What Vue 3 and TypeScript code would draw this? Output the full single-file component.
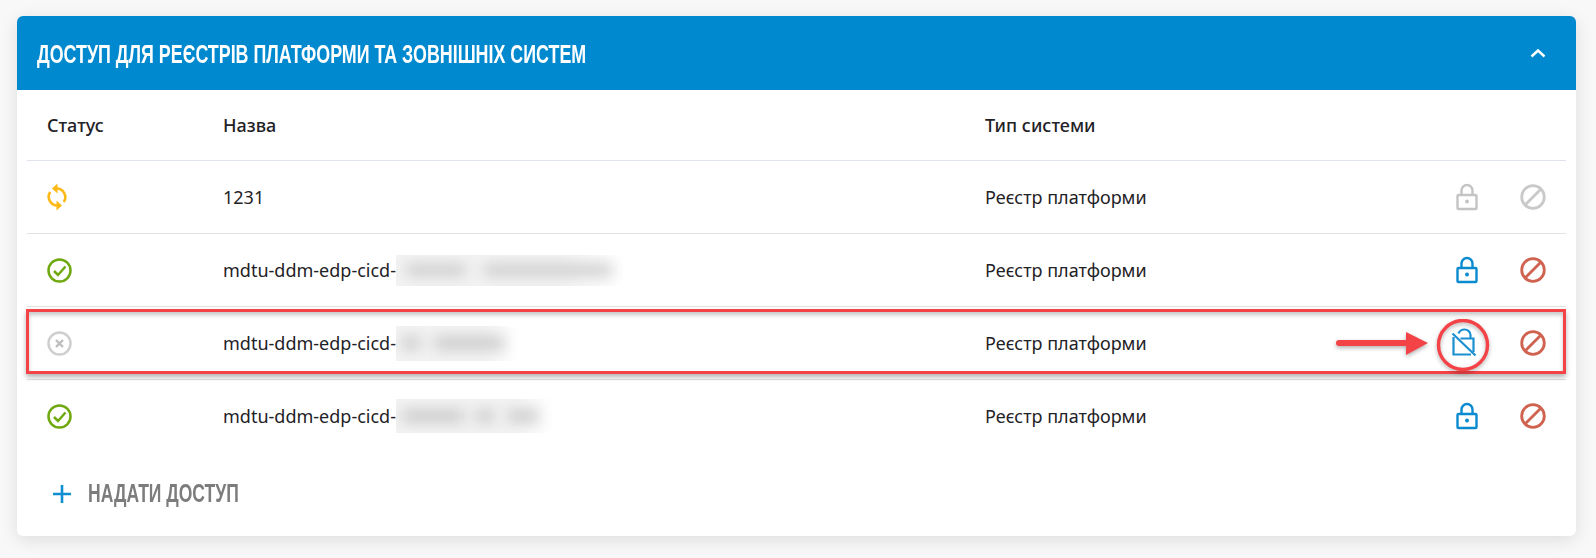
<script setup lang="ts">
interface Row {
  status: 'sync' | 'ok' | 'off'
  name: string
  patch?: { width: number; height: number; blobs: number[][] }
  muted?: boolean
  unlocked?: boolean
}

const rows: Row[] = [
  { status: 'sync', name: '1231', muted: true },
  {
    status: 'ok',
    name: 'mdtu-ddm-edp-cicd-',
    patch: { width: 228, height: 31, blobs: [[10, 60], [88, 128]] }
  },
  {
    status: 'off',
    name: 'mdtu-ddm-edp-cicd-',
    patch: { width: 122, height: 35, blobs: [[6, 18], [38, 70]] },
    unlocked: true
  },
  {
    status: 'ok',
    name: 'mdtu-ddm-edp-cicd-',
    patch: { width: 158, height: 34, blobs: [[6, 62], [80, 18], [112, 30]] }
  }
]
</script>

<template>
  <div class="page">
    <section class="card">
      <header class="card-head">
        <h2>ДОСТУП ДЛЯ РЕЄСТРІВ ПЛАТФОРМИ ТА ЗОВНІШНІХ СИСТЕМ</h2>
        <svg class="chevron" width="18" height="12" viewBox="0 0 18 12">
          <path d="M2.500 9.500 9 3.500l6.500 6" fill="none" stroke="#fff" stroke-width="2.4" />
        </svg>
      </header>

      <div class="table">
        <div class="row head-row">
          <span class="cell-status">Статус</span>
          <span>Назва</span>
          <span>Тип системи</span>
        </div>

        <div v-for="(row, i) in rows" :key="i" class="row" :class="{ last: i === rows.length - 1 }">
          <span class="cell-status">
            <svg v-if="row.status === 'sync'" width="20" height="28" viewBox="0 0 20 28" fill="none" stroke="#fdb913" stroke-width="2.6">
              <path d="M9 5.500A8.700 8.700 0 0 1 16.800 19" />
              <path d="M10.500 0.500 5 5.500l5.500 5z" fill="#fdb913" stroke="none" />
              <path d="M11 22.500A8.700 8.700 0 0 1 3.200 9" />
              <path d="M9.500 17.500l5.500 5-5.500 5z" fill="#fdb913" stroke="none" />
            </svg>
            <svg v-else-if="row.status === 'ok'" width="25" height="25" viewBox="0 0 25 25" fill="none" stroke="#6fa80f" stroke-width="2.5">
              <circle cx="12.500" cy="12.500" r="11" />
              <path d="M7 13l4 4 7.500-8.500" />
            </svg>
            <svg v-else width="25" height="25" viewBox="0 0 25 25" fill="none" stroke="#cfcfcf" stroke-width="2.5">
              <circle cx="12.500" cy="12.500" r="11" />
              <path d="M9 9l7 7M16 9l-7 7" stroke="#bdbdbd" stroke-width="2.400" />
            </svg>
          </span>

          <span class="cell-name">
            {{ row.name }}<span
              v-if="row.patch"
              class="patch"
              :style="{ width: row.patch.width + 'px', height: row.patch.height + 'px' }"
            ><i
              v-for="(b, k) in row.patch.blobs"
              :key="k"
              :style="{ left: b[0] + 'px', width: b[1] + 'px' }"
            /></span>
          </span>

          <span>Реєстр платформи</span>

          <span class="cell-action">
            <svg v-if="row.unlocked" class="icon-off" width="26" height="30" viewBox="0 0 26 30" fill="none" stroke="#1a8fd1" stroke-width="2.2">
              <path d="M7.500 5.500C8.500 3 10.800 1.500 13.500 1.500c3.300 0 6 2.500 6 5.500v4" />
              <path d="M9.500 10.500H22.500V24M2.500 9V26.500H20" />
              <path d="M1.500 5.500 24.500 27.500" />
            </svg>
            <svg v-else width="22" height="28" viewBox="0 0 22 28" fill="none" :stroke="row.muted ? '#c4c4c4' : '#0a8bd0'" stroke-width="2.4">
              <path d="M5.500 12V7.500a5.500 5.500 0 0 1 11 0V12" />
              <rect x="1.500" y="12" width="19" height="14" rx="1" />
              <circle cx="11" cy="18.500" r="2" :fill="row.muted ? '#c4c4c4' : '#0a8bd0'" stroke="none" />
            </svg>
          </span>

          <span class="cell-action">
            <svg width="26" height="26" viewBox="0 0 26 26" fill="none" :stroke="row.muted ? '#c9c9c9' : '#cf6350'" stroke-width="2.8">
              <circle cx="13" cy="13" r="11.300" />
              <path d="M5 21 21 5" />
            </svg>
          </span>

          <template v-if="row.unlocked">
            <div class="highlight" />
            <svg class="pointer" width="200" height="56" viewBox="0 0 200 56">
              <path d="M3 24h68" fill="none" stroke="#f44347" stroke-width="6" stroke-linecap="round" />
              <path d="M70 13l22 11-22 12z" fill="#f44347" />
              <circle cx="127" cy="26" r="24.500" fill="none" stroke="#f44347" stroke-width="3.400" />
            </svg>
          </template>
        </div>
      </div>

      <button class="add" type="button">
        <svg width="20" height="20" viewBox="0 0 20 20" stroke="#0f8fd2" stroke-width="2.6">
          <path d="M10 1v18M1 10h18" />
        </svg>
        <span class="add-label">НАДАТИ ДОСТУП</span>
      </button>
    </section>
  </div>
</template>

<style>
html,
body {
  background: #f8f8f8;
}
</style>

<style scoped>
.page {
  width: 1596px;
  height: 558px;
  box-sizing: border-box;
  padding: 16px 20px 22px 17px;
  overflow: hidden;
  font-family: "Noto Sans", sans-serif;
  color: #1f2226;
}

.card {
  height: 520px;
  background: #fff;
  border-radius: 6px;
  box-shadow: 0 4px 18px rgba(0, 0, 0, 0.11);
}

.card-head {
  display: flex;
  align-items: center;
  justify-content: space-between;
  height: 74px;
  padding: 0 29px 0 20px;
  background: #0089cf;
  border-radius: 6px 6px 0 0;
}

/* no condensed face is installed, so the wide one gets squeezed */
.card-head h2 {
  margin: 2px 0 0;
  font-family: "Liberation Sans", sans-serif;
  font-size: 25px;
  font-weight: 700;
  white-space: nowrap;
  color: #fff;
  transform: scaleX(0.714);
  transform-origin: left center;
}

.table {
  padding: 0 10px;
}

.row {
  position: relative;
  display: grid;
  grid-template-columns: 196px 762px 1fr 67px 66px;
  align-items: center;
  height: 72px;
  font-size: 18px;
  border-bottom: 1px solid #e2e2e2;
}

.head-row {
  height: 70px;
  font-weight: 500;
  border-bottom-color: #dfe3ee;
}

.row.last {
  border-bottom: 0;
}

.cell-status {
  display: flex;
  align-items: center;
  padding-left: 20px;
}

.cell-name {
  display: flex;
  align-items: center;
}

.patch {
  position: relative;
  overflow: hidden;
  background: linear-gradient(90deg, #f3f3f3 72%, #fff);
}

.patch i {
  position: absolute;
  top: 30%;
  height: 40%;
  background: #cdcdcd;
  filter: blur(7px);
}

.cell-action {
  display: flex;
  justify-content: center;
}

.icon-off {
  margin-right: 6px;
}

.highlight {
  position: absolute;
  top: 2px;
  left: -1px;
  right: 0;
  height: 65px;
  box-sizing: border-box;
  border: 3px solid #f44347;
  box-shadow: 0 3px 5px rgba(0, 0, 0, 0.3), inset 0 3px 4px rgba(0, 0, 0, 0.22);
  pointer-events: none;
}

.pointer {
  position: absolute;
  left: 1309px;
  top: 12px;
  filter: drop-shadow(0 2px 2px rgba(0, 0, 0, 0.3));
}

.add {
  display: flex;
  align-items: center;
  gap: 16px;
  margin: 27px 0 0 35px;
  padding: 0;
  background: none;
  border: 0;
  font-family: "Liberation Sans", sans-serif;
  font-size: 25px;
  font-weight: 700;
  color: #7c7c7c;
}

.add-label {
  transform: scaleX(0.7);
  transform-origin: left center;
}
</style>
